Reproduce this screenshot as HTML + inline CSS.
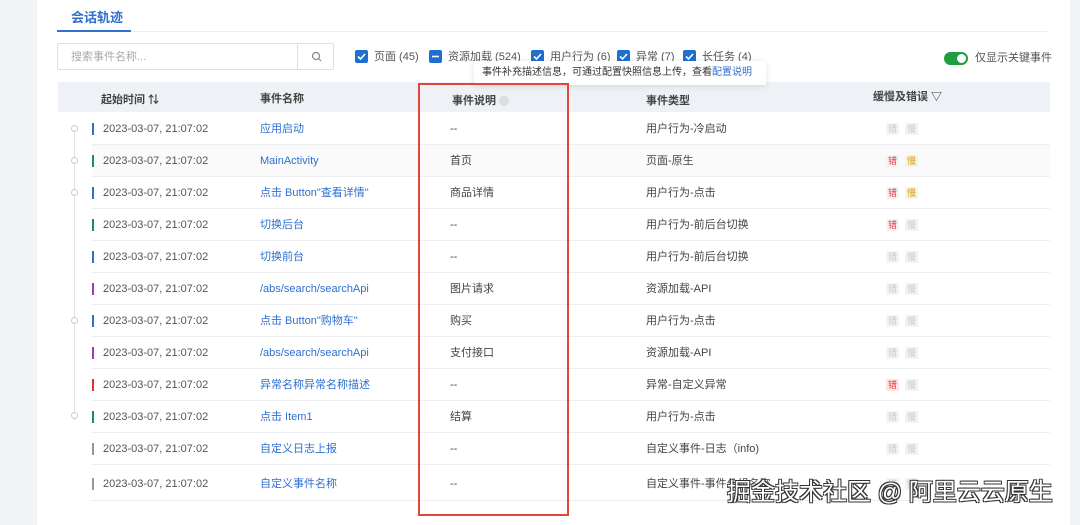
<!DOCTYPE html>
<html><head><meta charset="utf-8"><style>
*{margin:0;padding:0;box-sizing:border-box}
body{width:1080px;height:525px;overflow:hidden;background:#f3f4f6;font-family:"Liberation Sans","Noto Sans CJK SC",sans-serif;font-size:11px;color:#333;position:relative}
.card{position:absolute;left:37px;top:0;width:1033px;height:525px;background:#fff}
.a{position:absolute;white-space:nowrap}
.row{position:absolute;left:92px;width:958px;height:32px;border-bottom:1px solid #eceef1;line-height:32px}
.row>div{position:absolute;top:0;height:32px;line-height:32px}
.row .bar{top:10px;height:12px;width:2px;left:0}
.t{left:11px;color:#555}
.n{left:168px;color:#2f6fd0}
.d{left:358px;color:#444}
.ty{left:554px;color:#444}
.se{left:794px;font-size:9px;color:#ccc}
.se span{display:inline-block;background:#f3f3f3;padding:0 2px;margin-right:6px;line-height:12px}
.cb{position:absolute;width:13px;height:13px;background:#1f6fcf;border-radius:2px;top:50px}
.cb svg{position:absolute;left:2px;top:2px}
.dot{position:absolute;left:71px;width:7px;height:7px;border:1px solid #ccc;border-radius:50%;background:#fff}
.h{position:absolute;font-weight:bold;color:#444;line-height:14px}
</style></head><body>
<div class="card"></div>
<div class="a" style="left:71px;top:9px;color:#2f6fd0;font-size:13px;font-weight:bold;line-height:18px">会话轨迹</div>
<div class="a" style="left:57px;top:31px;width:990px;height:1px;background:#eceef1"></div>
<div class="a" style="left:57px;top:30px;width:74px;height:2px;background:#2f6fd0"></div>
<div class="a" style="left:57px;top:43px;width:277px;height:27px;border:1px solid #dcdfe4;border-radius:2px"></div>
<div class="a" style="left:71px;top:50px;color:#aaa;line-height:14px">搜索事件名称...</div>
<div class="a" style="left:297px;top:43px;width:1px;height:27px;background:#dcdfe4"></div>
<svg class="a" style="left:311px;top:51px" width="12" height="12" viewBox="0 0 12 12"><circle cx="5" cy="5" r="3.5" fill="none" stroke="#888" stroke-width="1.2"/><path d="M7.5 7.5L10 10" stroke="#888" stroke-width="1.2"/></svg>
<div class="cb" style="left:355px"><svg width="9" height="9" viewBox="0 0 9 9"><path d="M1 4.5L3.5 7L8 2" fill="none" stroke="#fff" stroke-width="1.6"/></svg></div><div class="a" style="left:374px;top:50px;color:#555;line-height:14px">页面 (45)</div>
<div class="cb" style="left:429px"><svg width="9" height="9" viewBox="0 0 9 9"><path d="M1 4.5H8" stroke="#fff" stroke-width="1.6"/></svg></div><div class="a" style="left:448px;top:50px;color:#555;line-height:14px">资源加载 (524)</div>
<div class="cb" style="left:531px"><svg width="9" height="9" viewBox="0 0 9 9"><path d="M1 4.5L3.5 7L8 2" fill="none" stroke="#fff" stroke-width="1.6"/></svg></div><div class="a" style="left:550px;top:50px;color:#555;line-height:14px">用户行为 (6)</div>
<div class="cb" style="left:617px"><svg width="9" height="9" viewBox="0 0 9 9"><path d="M1 4.5L3.5 7L8 2" fill="none" stroke="#fff" stroke-width="1.6"/></svg></div><div class="a" style="left:636px;top:50px;color:#555;line-height:14px">异常 (7)</div>
<div class="cb" style="left:683px"><svg width="9" height="9" viewBox="0 0 9 9"><path d="M1 4.5L3.5 7L8 2" fill="none" stroke="#fff" stroke-width="1.6"/></svg></div><div class="a" style="left:702px;top:50px;color:#555;line-height:14px">长任务 (4)</div>
<div class="a" style="left:944px;top:52px;width:24px;height:13px;border-radius:7px;background:#1e9e3e"><div style="position:absolute;right:2px;top:2px;width:9px;height:9px;border-radius:50%;background:#fff"></div></div>
<div class="a" style="left:975px;top:51px;color:#555;line-height:14px">仅显示关键事件</div>
<div class="a" style="left:58px;top:82px;width:992px;height:30px;background:#eef1f5"></div>
<div class="a" style="left:474px;top:61px;width:292px;height:24px;background:#fff;box-shadow:0 1px 6px rgba(0,0,0,.12);padding:0 8px;line-height:24px;font-size:10px;color:#333">事件补充描述信息，可通过配置快照信息上传，查看<span style="color:#2f6fd0">配置说明</span></div>
<div class="h" style="left:101px;top:93px">起始时间 ⇅</div>
<div class="h" style="left:260px;top:92px">事件名称</div>
<div class="h" style="left:452px;top:94px">事件说明 <span style="display:inline-block;width:10px;height:10px;border-radius:50%;background:#ddd;vertical-align:middle"></span></div>
<div class="h" style="left:646px;top:94px">事件类型</div>
<div class="h" style="left:873px;top:90px">缓慢及错误 ▽</div>
<div class="a" style="left:74px;top:130px;width:1px;height:290px;background:#e2e2e2"></div>
<div class="dot" style="top:125px"></div><div class="dot" style="top:157px"></div><div class="dot" style="top:189px"></div><div class="dot" style="top:317px"></div><div class="dot" style="top:412px"></div>

<div class="row" style="top:113px"><div class="bar" style="background:#2f6fd0"></div><div class="t">2023-03-07, 21:07:02</div><div class="n">应用启动</div><div class="d">--</div><div class="ty">用户行为-冷启动</div><div class="se"><span>错</span><span>慢</span></div></div>
<div class="row" style="top:145px;background:#fafafa"><div class="bar" style="background:#1e8a6a"></div><div class="t">2023-03-07, 21:07:02</div><div class="n">MainActivity</div><div class="d">首页</div><div class="ty">页面-原生</div><div class="se"><span style="color:#e33">错</span><span style="color:#e0a000">慢</span></div></div>
<div class="row" style="top:177px"><div class="bar" style="background:#2f6fd0"></div><div class="t">2023-03-07, 21:07:02</div><div class="n">点击 Button"查看详情"</div><div class="d">商品详情</div><div class="ty">用户行为-点击</div><div class="se"><span style="color:#e33">错</span><span style="color:#e0a000">慢</span></div></div>
<div class="row" style="top:209px"><div class="bar" style="background:#1e8a6a"></div><div class="t">2023-03-07, 21:07:02</div><div class="n">切换后台</div><div class="d">--</div><div class="ty">用户行为-前后台切换</div><div class="se"><span style="color:#e33">错</span><span>慢</span></div></div>
<div class="row" style="top:241px"><div class="bar" style="background:#2f6fd0"></div><div class="t">2023-03-07, 21:07:02</div><div class="n">切换前台</div><div class="d">--</div><div class="ty">用户行为-前后台切换</div><div class="se"><span>错</span><span>慢</span></div></div>
<div class="row" style="top:273px"><div class="bar" style="background:#a03ab8"></div><div class="t">2023-03-07, 21:07:02</div><div class="n">/abs/search/searchApi</div><div class="d">图片请求</div><div class="ty">资源加载-API</div><div class="se"><span>错</span><span>慢</span></div></div>
<div class="row" style="top:305px"><div class="bar" style="background:#2f6fd0"></div><div class="t">2023-03-07, 21:07:02</div><div class="n">点击 Button"购物车"</div><div class="d">购买</div><div class="ty">用户行为-点击</div><div class="se"><span>错</span><span>慢</span></div></div>
<div class="row" style="top:337px"><div class="bar" style="background:#a03ab8"></div><div class="t">2023-03-07, 21:07:02</div><div class="n">/abs/search/searchApi</div><div class="d">支付接口</div><div class="ty">资源加载-API</div><div class="se"><span>错</span><span>慢</span></div></div>
<div class="row" style="top:369px"><div class="bar" style="background:#d33"></div><div class="t">2023-03-07, 21:07:02</div><div class="n">异常名称异常名称描述</div><div class="d">--</div><div class="ty">异常-自定义异常</div><div class="se"><span style="color:#e33;background:#fde5e5">错</span><span>慢</span></div></div>
<div class="row" style="top:401px"><div class="bar" style="background:#1e8a6a"></div><div class="t">2023-03-07, 21:07:02</div><div class="n">点击 Item1</div><div class="d">结算</div><div class="ty">用户行为-点击</div><div class="se"><span>错</span><span>慢</span></div></div>
<div class="row" style="top:433px"><div class="bar" style="background:#999"></div><div class="t">2023-03-07, 21:07:02</div><div class="n">自定义日志上报</div><div class="d">--</div><div class="ty">自定义事件-日志（info)</div><div class="se"><span>错</span><span>慢</span></div></div>
<div class="row" style="top:465px;height:36px"><div class="bar" style="background:#999;top:13px"></div><div class="t" style="height:38px;line-height:38px">2023-03-07, 21:07:02</div><div class="n" style="height:38px;line-height:38px">自定义事件名称</div><div class="d" style="height:38px;line-height:38px">--</div><div class="ty" style="height:38px;line-height:38px">自定义事件-事件分组名称</div><div class="se" style="height:38px;line-height:38px"><span>错</span><span>慢</span></div></div>

<div class="a" style="left:418px;top:83px;width:151px;height:433px;border:2px solid #e0473a"></div>
<div class="a" style="left:727px;top:478px;font-size:24px;line-height:30px;color:#fff;text-shadow:1px 1px 0 #333,-1px -1px 0 #333,1px -1px 0 #333,-1px 1px 0 #333">掘金技术社区 @ 阿里云云原生</div>
</body></html>
